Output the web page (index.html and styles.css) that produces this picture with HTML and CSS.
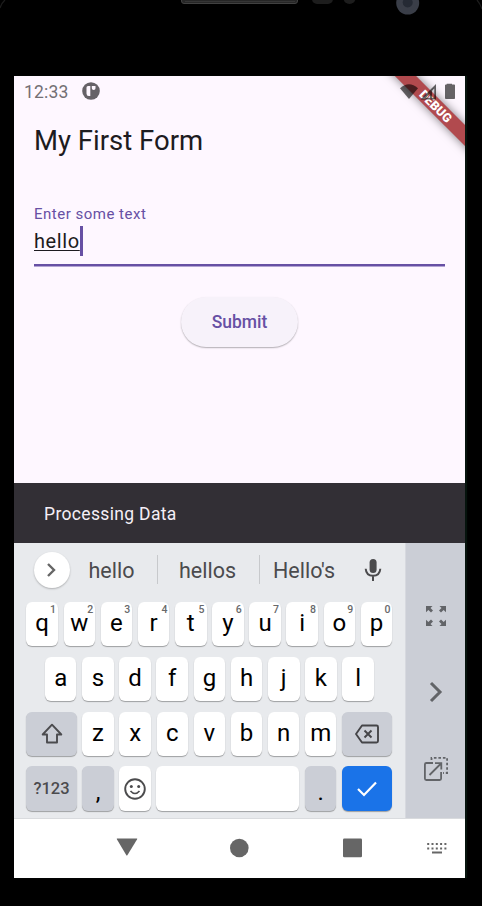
FILE: index.html
```html
<!DOCTYPE html>
<html lang="en">
<head>
<meta charset="utf-8">
<title>My First Form</title>
<link rel="stylesheet" href="styles.css">
</head>
<body>
<div class="phone">
  <svg class="bezel" width="482" height="76" viewBox="0 0 482 76">
    <path d="M0 8Q1.500 3 5 0M477 0Q480.500 4 482 9" fill="none" stroke="#1c1c1c" stroke-width="1.200"/>
    <rect x="181.500" y="-6" width="116" height="9.500" rx="2.500" fill="#262626" stroke="#414141"/>
    <path d="M185 1.500H295" stroke="#353535"/>
    <rect x="312" y="-8" width="21" height="12" rx="5" fill="#1d1d1d"/>
    <circle cx="349.500" cy="-2" r="6" fill="#1d1d1d"/>
    <circle cx="407.700" cy="3" r="11.500" fill="#3a3e48"/>
    <circle cx="407.700" cy="2.500" r="5" fill="#252a34"/>
  </svg>
  <div class="screen">
    <main class="app">
      <div class="debug"><span>DEBUG</span></div>
      <div class="status">
        <span class="clock">12:33</span>
        <svg class="status-app" width="18" height="18" viewBox="0 0 18 18"><circle cx="9" cy="9" r="8.800" fill="#666267"/><path d="M4.500 5.500Q4.500 3.900 6 3.900H8.300V14H6.800Q4.500 14 4.500 11.500ZM9.800 3.900H13.500V6.200Q13.500 8 11.700 8Q9.800 8 9.800 6.200Z" fill="#fef7ff"/></svg>
        <svg class="status-icons" width="56" height="18" viewBox="0 0 56 18"><g fill="#000" fill-opacity=".6"><path d="M0 5.200Q9 -2.500 18 5.200L9 16Z"/><path fill-rule="evenodd" d="M20.500 16.500L36 1V16.500ZM26 14.800H30V10.500ZM32 14.800H34.300V5.500L32 7.800Z"/><path d="M46.700 1.500V.8H52V1.500H54.200Q55 1.500 55 2.300V15.200Q55 16 54.200 16H46Q45 16 45 15.200V2.300Q45 1.500 46 1.500Z"/></g></svg>
      </div>
      <h1 class="title">My First Form</h1>
      <div class="field">
        <div class="label">Enter some text</div>
        <div class="entry"><span class="value">hello</span><span class="caret"></span></div>
      </div>
      <div class="submit">Submit</div>
    </main>
    <div class="snackbar">Processing Data</div>
    <div class="keyboard">
      <div class="pad">
        <div class="suggestions">
          <div class="more"><svg width="12" height="16" viewBox="0 0 12 16"><path d="M2 2L8 8L2 14" fill="none" stroke="#666" stroke-width="2.400"/></svg></div>
          <span class="word w1">hello</span><span class="word w2">hellos</span><span class="word w3">Hello's</span>
          <svg class="mic" width="18" height="24" viewBox="0 0 18 24"><rect x="5.600" y="1" width="7" height="14" rx="3.500" fill="#4b4b4d"/><path d="M1.700 10.800Q2.200 17.800 9 17.800T16.300 10.800M9 18V23" fill="none" stroke="#4b4b4d" stroke-width="2"/></svg>
        </div>
        <div class="row">
          <div class="key">q<sup>1</sup></div><div class="key">w<sup>2</sup></div><div class="key">e<sup>3</sup></div><div class="key">r<sup>4</sup></div><div class="key">t<sup>5</sup></div><div class="key">y<sup>6</sup></div><div class="key">u<sup>7</sup></div><div class="key">i<sup>8</sup></div><div class="key">o<sup>9</sup></div><div class="key">p<sup>0</sup></div>
        </div>
        <div class="row inset">
          <div class="key">a</div><div class="key">s</div><div class="key">d</div><div class="key">f</div><div class="key">g</div><div class="key">h</div><div class="key">j</div><div class="key">k</div><div class="key">l</div>
        </div>
        <div class="row">
          <div class="key wide gray"><svg width="24" height="22" viewBox="0 0 24 22"><path d="M12 1.700L21.300 11.500H17V19.500H7V11.500H2.700Z" fill="none" stroke="#4b4b4e" stroke-width="1.900" stroke-linejoin="round"/></svg></div>
          <div class="key">z</div><div class="key">x</div><div class="key">c</div><div class="key">v</div><div class="key">b</div><div class="key">n</div><div class="key">m</div>
          <div class="key wide gray"><svg width="26" height="20" viewBox="0 0 26 20"><path d="M8 1.500H22.500Q24 1.500 24 3V17Q24 18.500 22.500 18.500H8L2 10Z" fill="none" stroke="#454548" stroke-width="1.900" stroke-linejoin="round"/><path d="M10.500 6.500L17.500 13.500M17.500 6.500L10.500 13.500" stroke="#454548" stroke-width="1.900"/></svg></div>
        </div>
        <div class="row last">
          <div class="key wide gray symbols">?123</div>
          <div class="key gray punct">,</div>
          <div class="key"><svg width="24" height="24" viewBox="0 0 24 24"><circle cx="12" cy="12" r="9.800" fill="none" stroke="#4b4b4d" stroke-width="1.900"/><circle cx="8.300" cy="9.600" r="1.500" fill="#4b4b4d"/><circle cx="15.700" cy="9.600" r="1.500" fill="#4b4b4d"/><path d="M7.500 14Q12 19 16.500 14" fill="none" stroke="#4b4b4d" stroke-width="1.700"/></svg></div>
          <div class="key space"></div>
          <div class="key gray punct">.</div>
          <div class="key wide enter"><svg width="22" height="18" viewBox="0 0 22 18"><path d="M2 9L8 15L20 2.500" fill="none" stroke="#fff" stroke-width="2.200"/></svg></div>
        </div>
      </div>
      <div class="side">
        <svg width="22" height="22" viewBox="0 0 22 22"><g fill="#626468"><path d="M1 1H7.500L5.500 3L8 5.500L6 7.500L3.400 5L1 7.300Z"/><path d="M21 1H14.500L16.500 3L14 5.500L16 7.500L18.600 5L21 7.300Z"/><path d="M1 21H7.500L5.500 19L8 16.500L6 14.500L3.400 17L1 14.700Z"/><path d="M21 21H14.500L16.500 19L14 16.500L16 14.500L18.600 17L21 14.700Z"/></g></svg>
        <svg width="14" height="22" viewBox="0 0 14 22"><path d="M2 2L11 11L2 20" fill="none" stroke="#626468" stroke-width="3"/></svg>
        <svg width="26" height="26" viewBox="0 0 26 26"><g fill="none" stroke="#626468" stroke-width="1.800"><path d="M10 7H3.300Q1.900 7 1.900 8.400V22.600Q1.900 24 3.300 24H16.700Q18.100 24 18.100 22.600V16"/><path d="M6.500 19L18 7.500M12 7.200H18.300V13.500"/><path d="M8.500 4V1.900H24.100V17H20" stroke-dasharray="2.600 1.900"/></g></svg>
      </div>
    </div>
    <nav class="nav">
      <svg width="451" height="59" viewBox="0 1 451 59"><g fill="#666"><path d="M103 20.400H123Q123.500 20.400 123 21.500L113.500 37Q112.800 38 112.200 37L103 21.500Q102.500 20.400 103 20.400Z"/><circle cx="225.300" cy="30" r="9.300"/><rect x="329" y="20.500" width="19" height="18.800" rx="1.300"/></g><g stroke="#666" stroke-width="2"><path d="M413.200 26H433M413.200 30.400H433" stroke-dasharray="2 2.300"/><path d="M418 34.500H428"/></g></svg>
    </nav>
  </div>
</div>
</body>
</html>
```
FILE: styles.css
```css
* { box-sizing: border-box; }
body { margin: 0; background: #000; font-family: Roboto, sans-serif; }
.phone { width: 482px; height: 906px; overflow: hidden; background: #000; }
.bezel { display: block; }
.screen { width: 451px; height: 802px; margin-left: 14px; box-shadow: 2px 0 1px #06130d; }
.app { position: relative; height: 407px; overflow: hidden; background: #fef7ff; }
.status { position: relative; display: flex; align-items: flex-start; height: 40px; padding: 6px 8px 0 10px; }
.clock { font-size: 17.5px; line-height: 21px; letter-spacing: .2px; color: #736f74; width: 58px; white-space: nowrap; }
.status-icons { margin: 1px 1px 0 auto; width: 56px; }
.debug { position: absolute; left: 361px; top: 22px; width: 120px; height: 15px; transform: rotate(45deg); background: #b14a4e; box-shadow: 0 0 10px rgba(0,0,0,.5); text-align: center; }
.debug span { display: block; padding-left: 2px; font-size: 12.5px; line-height: 15px; font-weight: 900; color: #fff; }
.title { margin: 0 0 0 20px; height: 50px; font-size: 27.500px; line-height: 50px; font-weight: 400; color: #1d1b20; white-space: nowrap; }
.field { margin: 39px 20px 0; height: 61px; border-bottom: 2px solid #6750a4; box-shadow: 0 1px 0 #b3a3d4; }
.label { font-size: 15px; line-height: 18px; letter-spacing: .5px; color: #6750a4; }
.entry { display: flex; align-items: center; height: 30px; margin-top: 3px; }
.value { font-size: 20px; line-height: 24px; letter-spacing: .6px; color: #1d1b20; text-decoration: underline 1px; text-underline-offset: 2px; }
.caret { width: 3px; height: 30px; background: #6750a4; }
.submit { width: 117px; height: 50px; margin: 31px auto 0 167px; border-radius: 25px; background: #f7f2fa; box-shadow: 0 1px 1.500px rgba(0,0,0,.3); font-size: 17.500px; font-weight: 500; line-height: 50px; text-align: center; color: #6750a4; }
.snackbar { height: 60px; padding-left: 30px; background: #322f35; color: #f5eff7; font-size: 17.500px; line-height: 62px; letter-spacing: .34px; }
.keyboard { display: flex; height: 276px; background: #e8eaed; border-bottom: 1px solid #d9dbde; }
.pad { width: 392px; padding: 0 13.700px 0 12.400px; }
.suggestions { display: flex; align-items: center; height: 53px; padding-left: 7.600px; }
.more { display: flex; align-items: center; justify-content: center; width: 36px; height: 36px; border-radius: 50%; background: #fff; box-shadow: 0 1px 2px rgba(0,0,0,.25); }
.word { height: 29px; border-right: 1px solid #c7c9cc; text-align: center; font-size: 21.500px; line-height: 32px; color: #4b4b4d; }
.w1 { width: 88px; padding-right: 4px; }
.w2 { width: 102px; padding-right: 2px; }
.w3 { width: 90px; padding-right: 2px; border: 0; }
.mic { margin-left: 14px; }
.row { display: flex; gap: 5.600px; height: 44px; margin-top: 6px; }
.row + .row { margin-top: 10.800px; }
.row.inset { padding: 0 18.500px; }
.row.last { height: 45px; }
.key { position: relative; display: flex; align-items: center; justify-content: center; flex: 1 1 0; border-radius: 6px; background: #fff; box-shadow: 0 1px 1px rgba(0,0,0,.32); color: #000; font-size: 24px; line-height: 44px; padding-bottom: 2px; }
.key sup { position: absolute; top: 2px; right: 2px; font-size: 10.500px; line-height: 12px; font-weight: 500; color: #68696b; }
.key.wide { flex: 0 0 50.300px; padding-bottom: 0; }
.key.gray { background: #cbced6; }
.key.symbols { font-size: 16.500px; font-weight: 500; color: #4b4b4e; }
.key.punct { flex: 0 0 31.500px; padding-top: 6px; }
.row.last .key { padding-bottom: 0; }
.row.last .key:nth-child(3) { flex: 0 0 31.500px; }
.key.enter { background: #1a73e8; }
.side { display: flex; flex-direction: column; align-items: center; width: 59px; padding-top: 62px; background: #cbced6; box-shadow: -1px 0 0 #d7d9df; }
.side svg { flex: none; }
.side svg + svg { margin-top: 54px; }
.side svg:last-child { margin-top: 53px; }
.nav { height: 59px; background: #fff; }
.nav svg { display: block; }
```
